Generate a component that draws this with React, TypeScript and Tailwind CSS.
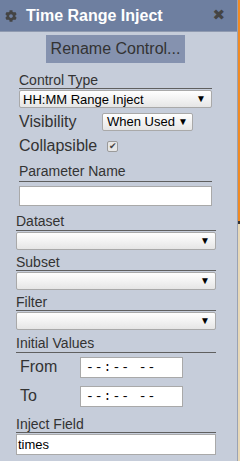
import { FaCog } from 'react-icons/fa';

const font = { fontFamily: '"Liberation Sans", Arial, sans-serif' };

const Arrow = () => <span className="text-[10px] leading-none text-black">▼</span>;

const SelectBox = ({ text, className }: { text?: string; className: string }) => (
  <div
    className={`flex items-center justify-between border border-[#a9a9a9] rounded-[2px] bg-gradient-to-b from-[#ffffff] to-[#e6e6e6] pl-[3px] pr-[5px] ${className}`}
  >
    <span className="text-[13px] leading-none text-black">{text}</span>
    <Arrow />
  </div>
);

const Label = ({ text, className }: { text: string; className: string }) => (
  <div className={`text-[14px] leading-[16px] text-[#333] border-b border-[#5f5f5f] ${className}`}>{text}</div>
);

const TimeInput = () => (
  <div className="w-[103px] h-[21px] bg-white border border-[#a9a9a9] flex items-center pl-[5px]">
    <span className="text-[13px] leading-none text-black tracking-[1px]" style={{ fontFamily: '"Liberation Mono", monospace' }}>
      --:-- --
    </span>
  </div>
);

export default function App() {
  return (
    <div className="w-[240px] h-[461px] flex bg-[#c6cdda] overflow-hidden" style={font}>
      <div className="w-[238px] h-[461px] flex flex-col bg-[#c6cdda] border-r border-[#9aa3b5]">
        <div className="h-[32px] flex items-center bg-[#6e7fa0] border-b border-[#8f9ab0] pl-[5px] pr-[12px]">
          <FaCog size={12} color="#444" className="mr-[9px]" />
          <span className="text-[16px] font-bold text-white leading-none">Time Range Inject</span>
          <span className="ml-auto text-[15px] leading-none text-[#444]" style={{ fontFamily: '"DejaVu Sans", sans-serif' }}>
            ✖
          </span>
        </div>

        <div className="ml-[46px] mt-[3px] w-[139px] h-[28px] bg-[#8592af] flex items-center justify-center text-[16px] text-[#333]">
          Rename Control...
        </div>

        <div className="ml-[19px] w-[193px] mt-[9px]">
          <Label text="Control Type" className="h-[17px]" />
          <SelectBox text="HH:MM Range Inject" className="h-[18px] mt-[1px]" />
          <div className="flex items-center mt-[4px] h-[19px]">
            <span className="text-[16px] leading-none text-[#333] w-[83px]">Visibility</span>
            <div className="w-[91px] h-[18px] flex items-center justify-between border border-[#a9a9a9] rounded-[2px] bg-gradient-to-b from-[#ffffff] to-[#e6e6e6] pl-[4px] pr-[4px]">
              <span className="text-[13px] leading-none text-black">When Used</span>
              <Arrow />
            </div>
          </div>
          <div className="flex items-center mt-[6px] h-[18px]">
            <span className="text-[16px] leading-none text-[#333] w-[88px]">Collapsible</span>
            <div className="w-[11px] h-[11px] border border-[#9a9a9a] bg-[#e6e6e6] flex items-center justify-center rounded-[2px]">
              <span className="text-[9px] leading-none text-[#444]">✔</span>
            </div>
          </div>
          <Label text="Parameter Name" className="h-[19px] mt-[8px]" />
          <div className="h-[20px] mt-[4px] bg-white border border-[#a9a9a9]" />
        </div>

        <div className="ml-[16px] w-[200px] mt-[7px]">
          <Label text="Dataset" className="h-[18px]" />
          <SelectBox className="h-[18px] mt-[1px]" />
          <Label text="Subset" className="h-[17px] mt-[4px]" />
          <SelectBox className="h-[18px] mt-[1px]" />
          <Label text="Filter" className="h-[17px] mt-[4px]" />
          <SelectBox className="h-[18px] mt-[1px]" />
          <Label text="Initial Values" className="h-[18px] mt-[5px]" />
          <div className="flex items-center mt-[3px] h-[22px]">
            <span className="text-[16px] leading-none text-[#333] w-[64px] pl-[4px]">From</span>
            <TimeInput />
          </div>
          <div className="flex items-center mt-[7px] h-[22px]">
            <span className="text-[16px] leading-none text-[#333] w-[64px] pl-[4px]">To</span>
            <TimeInput />
          </div>
          <Label text="Inject Field" className="h-[17px] mt-[9px]" />
          <div className="h-[21px] mt-[1px] bg-white border border-[#a9a9a9] flex items-center pl-[1px]">
            <span className="text-[13px] leading-none text-black">times</span>
          </div>
        </div>
      </div>
      <div className="w-[2px] flex flex-col">
        <div className="h-[221px] bg-[#f08a24]" />
        <div className="h-[3px] bg-[#333]" />
        <div className="flex-1 bg-[#e8d9b8]" />
      </div>
    </div>
  );
}
